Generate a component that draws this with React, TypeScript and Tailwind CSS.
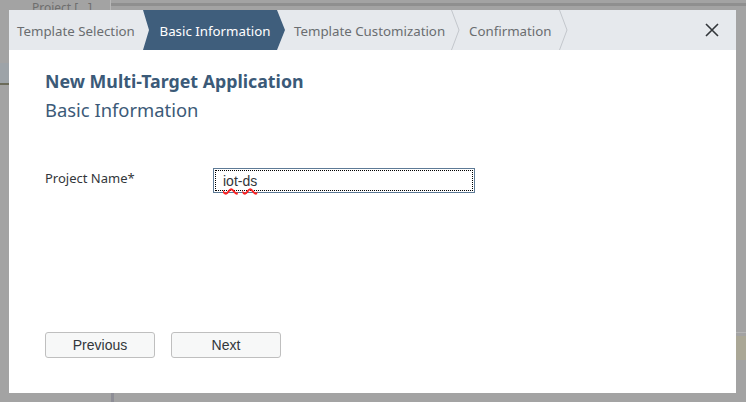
import React from "react";

function Chevron() {
  return (
    <svg width="9" height="40" viewBox="0 0 9 40" className="shrink-0">
      <polyline points="0.5,0 8,20 0.5,40" fill="none" stroke="#c3c7cc" strokeWidth="1" />
    </svg>
  );
}

export default function App() {
  return (
    <div className="relative w-[746px] h-[402px] overflow-hidden bg-[#a3a3a3]" style={{ fontFamily: "'Noto Sans', sans-serif" }}>
      {/* backdrop */}
      <div className="flex h-[10px]">
        <div className="w-[110px] pl-[32px] pt-px text-[12px] leading-[14px] text-[#6e6e6e] overflow-hidden whitespace-nowrap">Project [...]</div>
        <div className="w-px bg-[#b8b8b8]" />
        <div className="flex-1 flex flex-col">
          <div className="h-[3px]" />
          <div className="h-[3px] bg-[#8f8f8f]" />
        </div>
      </div>
      <div className="absolute left-0 top-[63px] w-[12px] h-[22px] bg-[#9da3a8] border-b-2 border-[#6b6b5a]" />
      <div className="absolute right-0 top-[332px] w-[12px] h-px bg-[#b5b5b5]" />
      <div className="absolute right-0 top-[336px] w-[12px] h-[24px] bg-[#aaa796]" />
      <div className="absolute left-[111px] top-[393px] w-[3px] h-[9px] bg-[#8e8e96]" />

      {/* dialog */}
      <div className="absolute left-[9px] top-[10px] w-[727px] h-[383px] bg-white flex flex-col">
        <div className="h-[40px] bg-[#e6e9ed] flex items-stretch text-[13.3px] text-[#6a6d70]">
          <div className="flex items-center pl-[8px] w-[134px] shrink-0 whitespace-nowrap">
            <span className="mt-[3px]">Template Selection</span>
          </div>
          <div className="flex items-center justify-center w-[142px] shrink-0 whitespace-nowrap text-white bg-[#3f5e7c] [clip-path:polygon(0_0,calc(100%_-_8px)_0,100%_50%,calc(100%_-_8px)_100%,0_100%,6px_50%)]">
            <span className="pl-[2px] mt-[3px]">Basic Information</span>
          </div>
          <div className="flex items-center pl-[9px] whitespace-nowrap">
            <span className="w-[157px] mt-[3px]">Template Customization</span>
            <Chevron />
          </div>
          <div className="flex items-center pl-[9px] whitespace-nowrap">
            <span className="w-[90px] mt-[3px]">Confirmation</span>
            <Chevron />
          </div>
          <div className="flex-1" />
          <div className="flex items-center pr-[17px]">
            <svg width="14" height="14" viewBox="0 0 14 14">
              <path d="M1 1 L13 13 M13 1 L1 13" stroke="#32363a" strokeWidth="1.6" fill="none" />
            </svg>
          </div>
        </div>

        <div className="flex-1 flex flex-col pl-[36px]">
          <div className="mt-[19px] text-[17.8px] font-bold leading-[24px] text-[#3b5a78]">New Multi-Target Application</div>
          <div className="mt-[5px] text-[18.4px] leading-[24px] text-[#3b5a78]">Basic Information</div>

          <div className="mt-[47px] flex items-start">
            <div className="w-[168px] text-[13px] leading-[18px] text-[#32363a]">Project Name*</div>
            <div className="-mt-[1px] w-[262px] h-[25px] border border-[#5d7a96] p-px">
              <div className="h-full border border-dotted border-black flex items-center pl-[7px] pt-[2px] text-[14px] text-[#32363a]" style={{ fontFamily: "'Liberation Sans', Arial, sans-serif" }}>
                <span className="underline decoration-wavy decoration-[#ff2020] decoration-[1.5px] underline-offset-[2px]">iot</span>
                <span>-</span>
                <span className="underline decoration-wavy decoration-[#ff2020] decoration-[1.5px] underline-offset-[2px]">ds</span>
              </div>
            </div>
          </div>

          <div className="flex-1" />
          <div className="flex gap-[16px] mb-[35px]" style={{ fontFamily: "'Liberation Sans', Arial, sans-serif" }}>
            <button className="w-[110px] h-[26px] rounded-[3px] border border-[#bfbfbf] bg-[#f7f8f8] text-[14px] text-[#32363a]">Previous</button>
            <button className="w-[110px] h-[26px] rounded-[3px] border border-[#bfbfbf] bg-[#f7f8f8] text-[14px] text-[#32363a]">Next</button>
          </div>
        </div>
      </div>
    </div>
  );
}
